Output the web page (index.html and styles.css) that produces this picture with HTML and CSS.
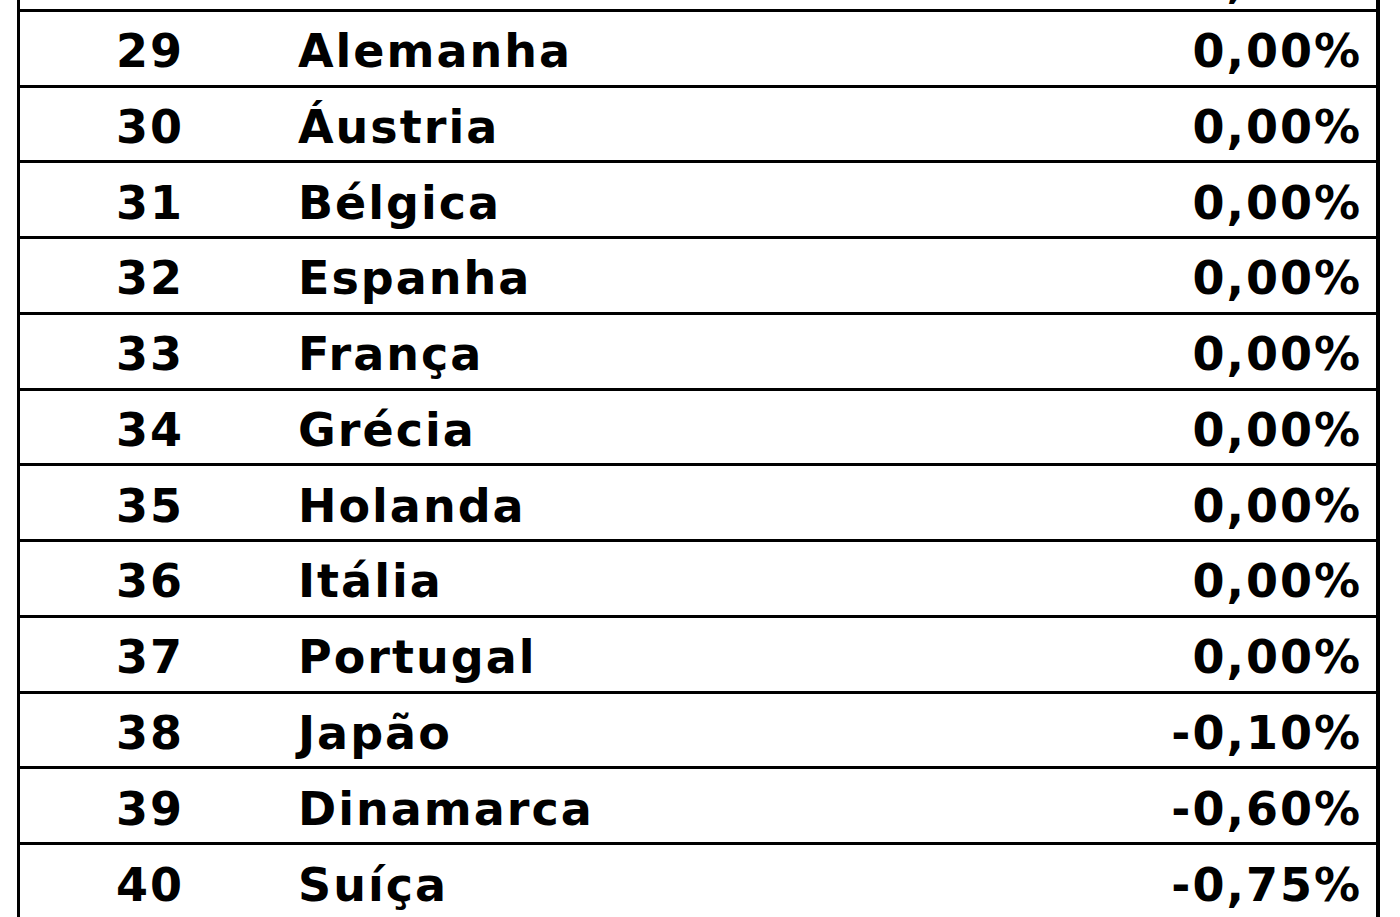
FILE: index.html
```html
<!DOCTYPE html>
<html lang="pt">
<head>
<meta charset="utf-8">
<title>Tabela</title>
<link rel="stylesheet" href="styles.css">
</head>
<body>
<div class="viewport">
  <div class="table">
    <div class="row partial"><div class="num">28</div><div class="name">Canadá</div><div class="val">0,00%</div></div>
    <div class="row"><div class="num">29</div><div class="name">Alemanha</div><div class="val">0,00%</div></div>
    <div class="row"><div class="num">30</div><div class="name">Áustria</div><div class="val">0,00%</div></div>
    <div class="row"><div class="num">31</div><div class="name">Bélgica</div><div class="val">0,00%</div></div>
    <div class="row"><div class="num">32</div><div class="name">Espanha</div><div class="val">0,00%</div></div>
    <div class="row"><div class="num">33</div><div class="name">França</div><div class="val">0,00%</div></div>
    <div class="row"><div class="num">34</div><div class="name">Grécia</div><div class="val">0,00%</div></div>
    <div class="row"><div class="num">35</div><div class="name">Holanda</div><div class="val">0,00%</div></div>
    <div class="row"><div class="num">36</div><div class="name">Itália</div><div class="val">0,00%</div></div>
    <div class="row"><div class="num">37</div><div class="name">Portugal</div><div class="val">0,00%</div></div>
    <div class="row"><div class="num">38</div><div class="name">Japão</div><div class="val">-0,10%</div></div>
    <div class="row"><div class="num">39</div><div class="name">Dinamarca</div><div class="val">-0,60%</div></div>
    <div class="row last"><div class="num">40</div><div class="name">Suíça</div><div class="val">-0,75%</div></div>
  </div>
</div>
</body>
</html>
```

FILE: styles.css
```css
html, body {
  margin: 0;
  padding: 0;
  background: #ffffff;
}

.viewport {
  width: 1400px;
  height: 917px;
  overflow: hidden;
}

.table {
  margin-top: -64px;
  margin-left: 17px;
  width: 1363px;
  box-sizing: border-box;
  border-left: 3px solid #000;
  border-right: 4px solid #000;
  font-family: "DejaVu Sans", "Liberation Sans", sans-serif;
  font-weight: bold;
  font-size: 46px;
  letter-spacing: 2px;
  color: #000;
}

.row {
  display: grid;
  grid-template-columns: 260px 1fr auto;
  align-items: center;
  height: 75.75px;
  box-sizing: border-box;
  border-bottom: 3px solid #000;
  padding-top: 6px;
}

.row.partial {
  padding-top: 18px;
}

.row.last {
  border-bottom: 2px solid #9a9a9a;
  height: 75px;
}

.num {
  text-align: center;
}

.name {
  padding-left: 18px;
}

.val {
  padding-right: 14px;
  text-align: right;
}
```
